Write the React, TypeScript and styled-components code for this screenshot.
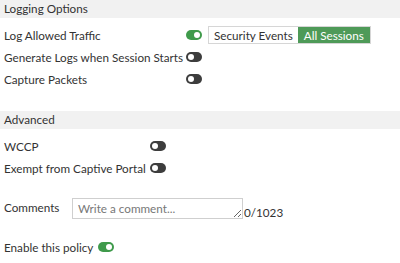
import styled, { createGlobalStyle } from "styled-components"

const GlobalStyle = createGlobalStyle`
  body {
    margin: 0;
    background: #ffffff;
    font-family: Lato, "Open Sans", sans-serif;
    font-size: 11.7px;
    color: #333333;
  }
`

const Page = styled.div`
  width: 400px;
  height: 263px;
  overflow: hidden;
`

const SectionHeader = styled.div<{ $top?: number }>`
  background-color: #f1f1f1;
  height: 18px;
  line-height: 17px;
  padding-left: 4px;
  font-size: 11.7px;
  margin-top: ${(p) => p.$top ?? 0}px;
`

const Rows = styled.div`
  display: flex;
  flex-direction: column;
  gap: 4px;
  padding: 8px 0 0 4px;
`

const Row = styled.div`
  display: flex;
  align-items: center;
  height: 18px;
`

const Label = styled.div<{ $width?: number }>`
  width: ${(p) => (p.$width ? `${p.$width}px` : "auto")};
  flex-shrink: 0;
  white-space: nowrap;
  font-size: 11.7px;
`

const Toggle = styled.span<{ $on?: boolean }>`
  position: relative;
  display: inline-block;
  width: 16px;
  height: 10px;
  border-radius: 5px;
  background-color: ${(p) => (p.$on ? "#3f9a4b" : "#3d3d3d")};

  &::after {
    content: "";
    position: absolute;
    top: 2px;
    left: ${(p) => (p.$on ? "8px" : "2px")};
    width: 6px;
    height: 6px;
    border-radius: 50%;
    background: #ffffff;
  }
`

const Segmented = styled.div`
  display: flex;
  margin-left: 6px;
  border: 1px solid #d6d6d6;
  height: 16px;
`

const Segment = styled.div<{ $active?: boolean }>`
  padding: 0 ${(p) => (p.$active ? 6 : 5)}px;
  line-height: 16px;
  font-size: 11.7px;
  background-color: ${(p) => (p.$active ? "#4e9a58" : "#ffffff")};
  color: ${(p) => (p.$active ? "#ffffff" : "#333333")};
`

const CommentRow = styled.div`
  display: flex;
  align-items: flex-start;
  padding: 21px 0 0 4px;
`

const CommentLabel = styled.div`
  width: 68px;
  padding-top: 2px;
  font-size: 11.7px;
`

const TextArea = styled.textarea`
  width: 171px;
  height: 21px;
  box-sizing: border-box;
  border: 1px solid #cfcfcf;
  padding: 2px 5px;
  font-family: Lato, "Open Sans", sans-serif;
  font-size: 11.7px;
  color: #333;
  resize: both;
  margin: 0;

  &::placeholder {
    color: #777777;
  }
`

const Counter = styled.div`
  padding-top: 7px;
  margin-left: 1px;
  font-size: 11.7px;
`

const EnableRow = styled.div`
  display: flex;
  align-items: center;
  gap: 5px;
  padding: 21px 0 0 4px;
`

export default function App() {
  return (
    <Page>
      <GlobalStyle />
      <SectionHeader>Logging Options</SectionHeader>
      <Rows>
        <Row>
          <Label $width={182}>Log Allowed Traffic</Label>
          <Toggle $on />
          <Segmented>
            <Segment>Security Events</Segment>
            <Segment $active>All Sessions</Segment>
          </Segmented>
        </Row>
        <Row>
          <Label $width={182}>Generate Logs when Session Starts</Label>
          <Toggle />
        </Row>
        <Row>
          <Label $width={182}>Capture Packets</Label>
          <Toggle />
        </Row>
      </Rows>

      <SectionHeader $top={23}>Advanced</SectionHeader>
      <Rows>
        <Row>
          <Label $width={146}>WCCP</Label>
          <Toggle />
        </Row>
        <Row>
          <Label $width={146}>Exempt from Captive Portal</Label>
          <Toggle />
        </Row>
      </Rows>

      <CommentRow>
        <CommentLabel>Comments</CommentLabel>
        <TextArea placeholder="Write a comment..." />
        <Counter>0/1023</Counter>
      </CommentRow>

      <EnableRow>
        <Label>Enable this policy</Label>
        <Toggle $on />
      </EnableRow>
    </Page>
  )
}
